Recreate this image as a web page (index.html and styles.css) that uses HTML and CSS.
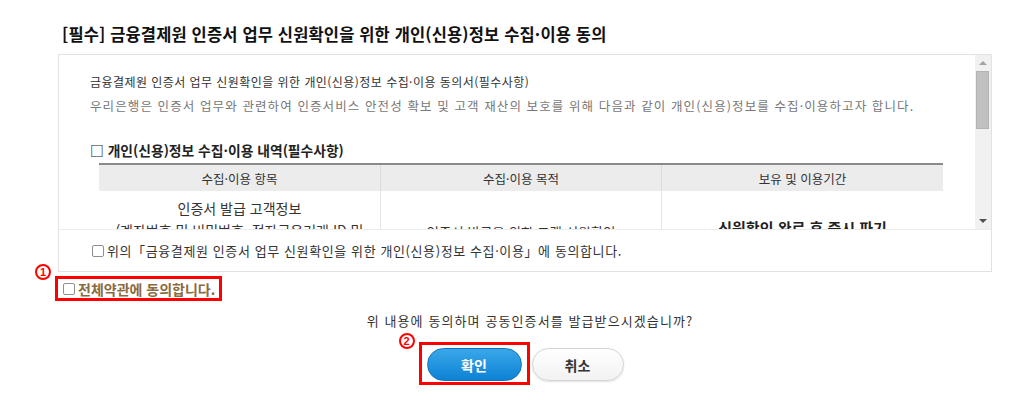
FILE: index.html
```html
<!DOCTYPE html>
<html lang="ko">
<head>
<meta charset="utf-8">
<link rel="stylesheet" href="styles.css">
</head>
<body>
<div class="page">
  <h1 class="title">[필수] 금융결제원 인증서 업무 신원확인을 위한 개인(신용)정보 수집·이용 동의</h1>
  <div class="terms">
    <div class="scroll">
      <div class="scroll-body">
        <p class="lead">금융결제원 인증서 업무 신원확인을 위한 개인(신용)정보 수집·이용 동의서(필수사항)</p>
        <p class="desc">우리은행은 인증서 업무와 관련하여 인증서비스 안전성 확보 및 고객 재산의 보호를 위해 다음과 같이 개인(신용)정보를 수집·이용하고자 합니다.</p>
        <p class="section">□ 개인(신용)정보 수집·이용 내역(필수사항)</p>
        <table class="info">
          <thead>
            <tr><th>수집·이용 항목</th><th>수집·이용 목적</th><th>보유 및 이용기간</th></tr>
          </thead>
          <tbody>
            <tr>
              <td>인증서 발급 고객정보<br>(계좌번호 및 비밀번호, 전자금융거래 ID 및<br>비밀번호, 보안매체 정보)</td>
              <td class="mid">인증서 발급을 위한 고객 신원확인</td>
              <td class="strong">신원확인 완료 후 즉시 파기</td>
            </tr>
          </tbody>
        </table>
      </div>
      <div class="scrollbar">
        <div class="arrow up"></div>
        <div class="thumb"></div>
        <div class="track"></div>
        <div class="arrow down"></div>
      </div>
    </div>
    <label class="agree-row"><span class="chk"></span>위의「금융결제원 인증서 업무 신원확인을 위한 개인(신용)정보 수집·이용」에 동의합니다.</label>
  </div>
  <div class="all-row">
    <label class="all-agree hl"><span class="marker m1">1</span><span class="chk"></span>전체약관에 동의합니다.</label>
  </div>
  <p class="question">위 내용에 동의하며 공동인증서를 발급받으시겠습니까?</p>
  <div class="buttons">
    <div class="hl ok-wrap"><span class="marker m2">2</span><button class="btn ok">확인</button></div>
    <button class="btn cancel">취소</button>
  </div>
</div>
</body>
</html>
```

FILE: styles.css
```css
* { box-sizing: border-box; }
html, body { margin: 0; padding: 0; background: #fff; }
body {
  font-family: "Noto Sans CJK KR", "Noto Sans", sans-serif;
  color: #333;
  width: 1024px;
  height: 404px;
  overflow: hidden;
}
.page {
  padding-left: 58px;
  width: 992px;
}
p { margin: 0; }
.title {
  margin: 24px 0 10px 4px;
  font-size: 16.5px;
  line-height: 20px;
  font-weight: bold;
  color: #111;
  letter-spacing: 0.15px;
}
.terms {
  border: 1px solid #e2e2e2;
  width: 934px;
}
.scroll {
  display: flex;
  height: 174px;
  overflow: hidden;
}
.scroll-body {
  flex: 1;
  padding: 18px 0 0 31px;
  overflow: hidden;
}
.lead {
  font-size: 12px;
  line-height: 18px;
  color: #333;
  letter-spacing: 0.45px;
}
.desc {
  margin-top: 6px;
  font-size: 12.5px;
  line-height: 18px;
  color: #777;
  letter-spacing: 1.1px;
  white-space: nowrap;
}
.section {
  margin-top: 26px;
  font-size: 13.8px;
  line-height: 18px;
  font-weight: bold;
  color: #222;
}
.info {
  margin: 4px 0 0 9px;
  width: 844px;
  border-collapse: collapse;
  table-layout: fixed;
  border-top: 2px solid #8a8a8a;
}
.info th {
  background: #ececec;
  height: 27px;
  font-size: 12.5px;
  font-weight: normal;
  color: #333;
  border-left: 1px solid #dcdcdc;
  padding: 0;
}
.info td {
  border-left: 1px solid #e4e4e4;
  text-align: center;
  vertical-align: middle;
  font-size: 14px;
  line-height: 22px;
  padding: 6px 0;
  color: #333;
}
.info th:first-child, .info td:first-child { border-left: none; }
.info td.mid { font-size: 13.5px; padding-top: 10px; }
.info td.strong { font-size: 15px; font-weight: bold; color: #222; padding-bottom: 10px; }
.scrollbar {
  width: 16px;
  background: #f1f1f1;
  display: flex;
  flex-direction: column;
}
.arrow {
  height: 16px;
  display: flex;
  align-items: center;
  justify-content: center;
}
.arrow::before {
  content: "";
  width: 0;
  height: 0;
  border-left: 4px solid transparent;
  border-right: 4px solid transparent;
}
.arrow.up::before { border-bottom: 4px solid #a3a3a3; }
.arrow.down::before { border-top: 4px solid #505050; }
.thumb {
  margin: 0 2px 0 1px;
  height: 58px;
  background: #c1c1c1;
  border: 1px solid #b3b3b3;
}
.track { flex: 1; }
.agree-row {
  display: flex;
  align-items: center;
  height: 42px;
  border-top: 1px solid #ececec;
  padding-left: 33px;
  font-size: 13px;
  letter-spacing: 0.6px;
  color: #333;
}
.agree-row .chk { margin-right: 3px; }
.chk {
  display: inline-block;
  width: 12px;
  height: 12px;
  border: 1px solid #8f8f8f;
  border-radius: 2px;
  background: #fff;
  margin-right: 2px;
  flex: none;
}
.all-row {
  margin-top: 4px;
  margin-left: -3px;
  display: flex;
}
.hl {
  border: 3px solid #ff0000;
  position: relative;
}
.all-agree {
  display: flex;
  align-items: center;
  height: 25px;
  padding: 0 4px 0 5px;
  font-size: 14px;
  font-weight: bold;
  color: #8a6a40;
}
.all-agree .chk { margin-right: 3px; }
.marker {
  position: absolute;
  width: 16px;
  height: 16px;
  border: 2px solid #f00;
  border-radius: 50%;
  color: #f00;
  font-size: 11px;
  font-weight: bold;
  line-height: 12px;
  text-align: center;
  background: #fff;
  font-family: "Liberation Sans", sans-serif;
}
.m1 { left: -23px; top: -15px; }
.m2 { left: -23px; top: -12px; }
.question {
  margin-top: 11px;
  text-align: center;
  padding-left: 10px;
  font-size: 13px;
  line-height: 18px;
  letter-spacing: 1.1px;
  color: #333;
}
.buttons {
  margin-top: 12px;
  display: flex;
  justify-content: center;
  align-items: flex-start;
  gap: 2px;
  padding-right: 8px;
}
.ok-wrap {
  padding: 3px 5px 1px 5px;
}
.btn {
  height: 33px;
  border-radius: 17px;
  font-family: "Noto Sans CJK KR", sans-serif;
  font-size: 14px;
  font-weight: bold;
  padding: 0;
  cursor: pointer;
}
.ok {
  width: 95px;
  color: #fff;
  border: 1px solid #0c73bd;
  background: linear-gradient(#3aa7ea, #0d82d3);
  display: block;
}
.cancel {
  margin-top: 6px;
  width: 92px;
  color: #333;
  border: 1px solid #d4d4d4;
  background: linear-gradient(#ffffff, #f2f2f2);
  box-shadow: 0 1px 2px rgba(0,0,0,0.12);
}
```
